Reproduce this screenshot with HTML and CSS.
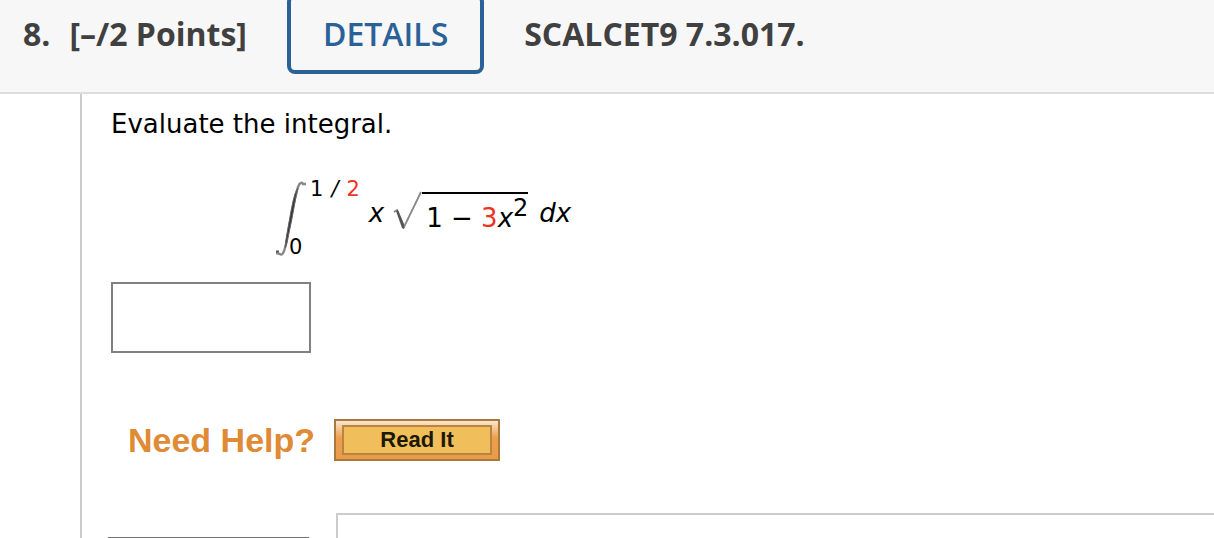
FILE: index.html
```html
<!DOCTYPE html>
<html lang="en">
<head>
<meta charset="utf-8">
<meta name="viewport" content="width=device-width, initial-scale=1">
<title>Question 8</title>
<link rel="stylesheet" href="styles.css">
</head>
<body>
<section class="question">
  <header class="question-header">
    <span class="number">8.</span>
    <span class="points">[–/2 Points]</span>
    <button class="details" type="button">DETAILS</button>
    <span class="source">SCALCET9 7.3.017.</span>
  </header>
  <div class="question-body">
    <label class="prompt" for="answer">Evaluate the integral.</label>
    <div class="formula">
      <svg class="integral" width="30" height="76" viewBox="0 0 30 76" aria-label="integral">
        <path d="M30 3L27 3C26 1 24 1 22 6C19 16 12 52 10 63C8 72 6 75 4 73L0 72" fill="none" stroke="#888" stroke-width="2.4"/>
        <path d="M22 7C19 18 17 34 14 47C12 56 11 64 9 67C10 56 13 42 15 30C17 20 19 10 22 7Z" fill="#333" stroke="#666"/>
        <path d="M0 70.5H3" stroke="#555" stroke-width="2"/>
      </svg>
      <div class="limits">
        <span class="upper"><span>1</span><i>/</i><span class="value">2</span></span>
        <span class="lower">0</span>
      </div>
      <i class="factor">x</i>
      <svg class="radical" width="29" height="40" viewBox="0 0 29 40" aria-label="square root">
        <path d="M1 21L4 19L11 36L28 1" fill="none" stroke="#888" stroke-width="1.8"/>
        <path d="M3 20L5 19L11 33L11 38L9 37Z" fill="#555"/>
      </svg>
      <span class="radicand">1 − <span class="value">3</span><i>x</i><sup>2</sup></span>
      <i class="differential">dx</i>
    </div>
    <input class="answer" id="answer" type="text" autocomplete="off">
    <div class="help">
      <span class="help-title">Need Help?</span>
      <button class="read-it" type="button"><span class="read-it-label">Read It</span></button>
    </div>
    <div class="footer-row">
      <div class="submit-box"></div>
      <div class="notes-box"></div>
    </div>
  </div>
</section>
</body>
</html>
```
FILE: styles.css
```css
* {
  box-sizing: border-box;
}

body {
  margin: 0;
  background: #fff;
  color: #000;
  font-family: Verdana, "DejaVu Sans", sans-serif;
  font-size: 26px;
}

.question {
  display: flex;
  flex-direction: column;
}

.question-header {
  display: flex;
  align-items: baseline;
  margin-top: -6px;
  padding: 0 23px 18px;
  border-bottom: 2px solid #ddd;
  background: #f7f7f7;
  color: #404040;
  font: 700 32px/44px "Open Sans", sans-serif;
  white-space: nowrap;
}

.points {
  margin-left: 19px;
}

.details {
  margin: 0 40px;
  padding: 14px 32px;
  border: 4px solid #2a6297;
  border-radius: 8px;
  background: transparent;
  color: #2a6297;
  font: 600 32px/44px "Open Sans", sans-serif;
}

.question-body {
  flex: 1;
  margin-left: 80px;
  padding: 14px 0 0 29px;
  border-left: 2px solid #ccc;
}

.prompt {
  display: block;
  line-height: 32px;
}

.formula {
  display: flex;
  align-items: flex-start;
  margin: 37px 0 0 165px;
  height: 82px;
  line-height: 32px;
  white-space: nowrap;
}

.integral {
  margin-top: 4px;
}

.limits {
  display: flex;
  flex-direction: column;
  justify-content: space-between;
  margin-left: -17px;
  height: 82px;
  font-size: 21px;
  line-height: 24px;
}

.upper {
  display: flex;
  gap: 8px;
  padding-left: 21px;
}

.value {
  color: #ed3323;
}

.factor {
  margin: 20px 9px 0;
}

.radical {
  margin-top: 14px;
}

.radicand {
  margin-top: 15px;
  padding: 8px 0 0 4px;
  border-top: 2px solid #000;
  line-height: 32px;
}

.radicand sup {
  font-size: 24px;
  line-height: 0;
  vertical-align: 11px;
}

.differential {
  margin: 20px 0 0 11px;
}

.answer {
  display: block;
  width: 200px;
  height: 71px;
  margin-top: 23px;
  padding: 4px 8px;
  border: 2px solid #808080;
  background: #fff;
  font: inherit;
}

.help {
  display: flex;
  align-items: center;
  gap: 19px;
  margin: 66px 0 0 17px;
}

.help-title {
  color: #df8a35;
  font: 700 34px/40px "Liberation Sans", Arial, sans-serif;
}

.read-it {
  width: 166px;
  height: 42px;
  padding: 4px 6px;
  border: 2px solid #a9783d;
  background: linear-gradient(#fbe7d0, #f3bd85 25%, #ec9f4d 45%, #e99b49);
  color: #1c1905;
}

.read-it-label {
  display: block;
  border: 2px solid #b88640;
  background: #f1be5c;
  font: 700 22px/26px "Liberation Sans", Arial, sans-serif;
}

.footer-row {
  display: flex;
  align-items: flex-start;
  gap: 27px;
  margin: 52px 0 0 -3px;
}

.submit-box {
  width: 201px;
  margin-top: 24px;
  border-top: 1px solid #707070;
}

.notes-box {
  flex: 1;
  height: 25px;
  border: 2px solid #ccc;
  border-width: 2px 0 0 2px;
}
```
